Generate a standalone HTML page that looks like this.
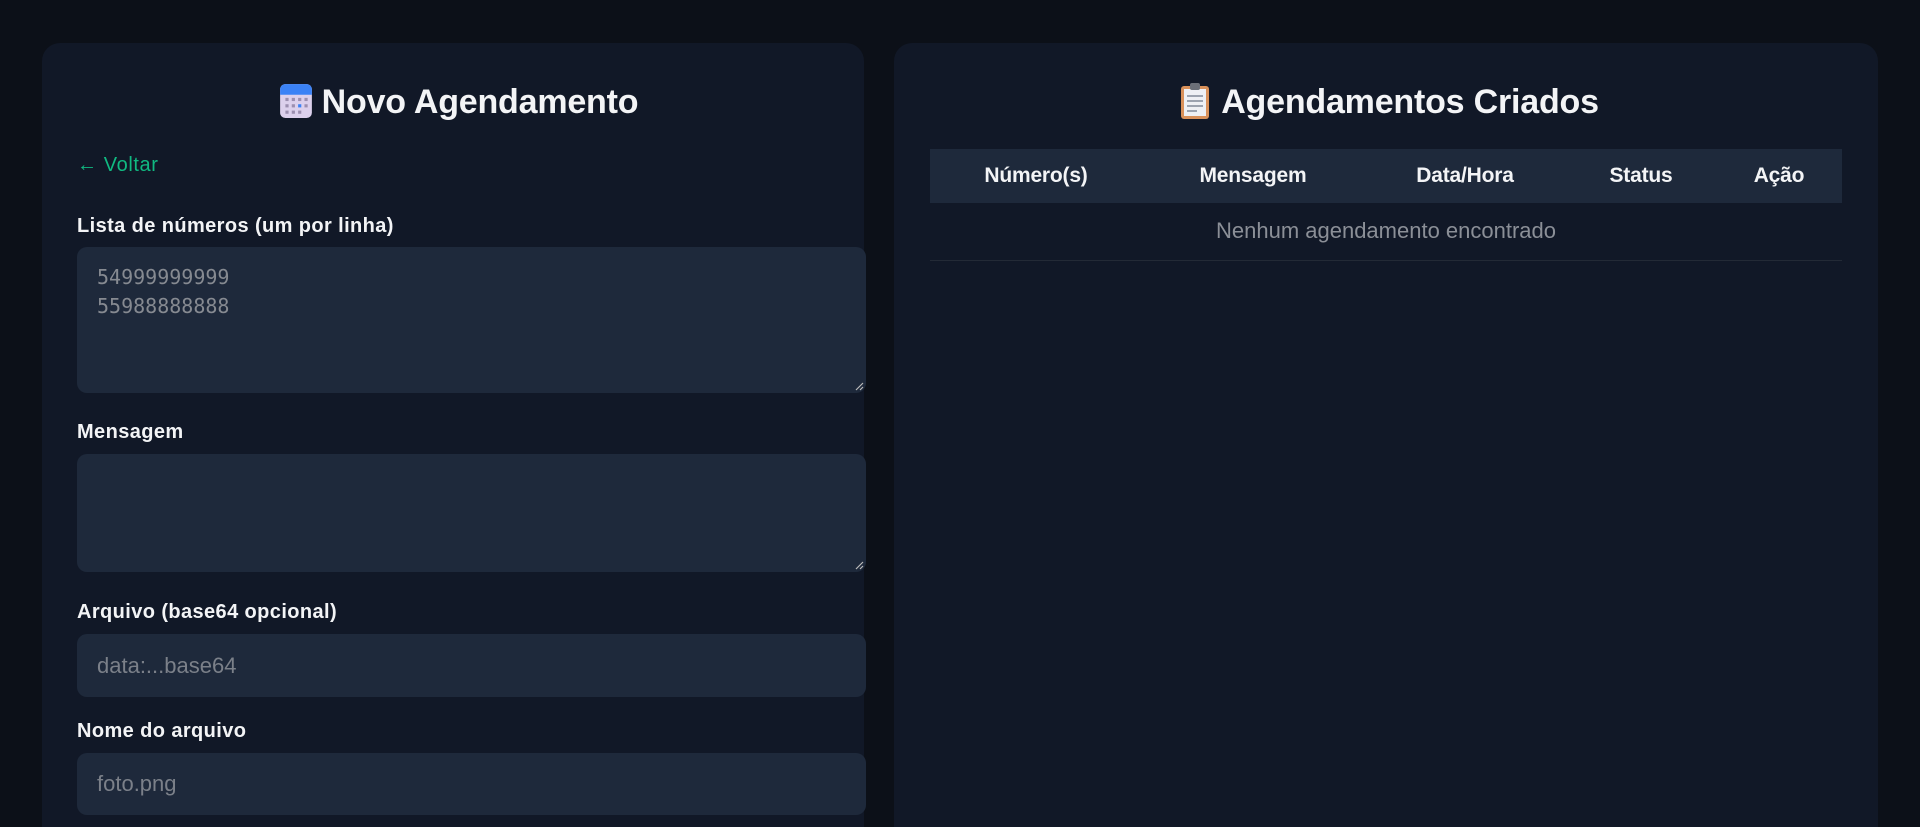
<!DOCTYPE html>
<html style="overflow:hidden"><head><meta charset="utf-8"><style>
*{box-sizing:border-box;margin:0;padding:0}
html,body{width:1920px;height:827px;overflow:hidden}
body{background:#0c1018;font-family:"Liberation Sans",sans-serif;color:#f3f4f6;position:relative}
.card{position:absolute;top:43px;background:#111827;border-radius:18px;height:784px;border-bottom-left-radius:0;border-bottom-right-radius:0}
.l{left:42px;width:822px}
.r{left:894px;width:984px}
h2{position:absolute;top:81px;text-align:center;font-size:34px;font-weight:bold;line-height:42px;letter-spacing:-0.2px}
.back{position:absolute;left:77px;top:152px;color:#10b981;font-size:20px;line-height:26px;letter-spacing:0.6px}
.lab{position:absolute;left:77px;font-size:20px;font-weight:bold;line-height:24px;letter-spacing:0.4px}
.box{position:absolute;left:77px;width:789px;background:#1e293b;border-radius:10px;color:#7b8089;font-size:22px}
.mono{font-family:"DejaVu Sans Mono",monospace;font-size:20px;line-height:29px;padding:16px 20px;color:#868a91}
.grip{position:absolute;right:2px;bottom:2px}
table{position:absolute;left:930px;top:149px;width:912px;border-collapse:collapse}
th{background:#1e293b;height:54px;font-size:21px;font-weight:bold;text-align:center;letter-spacing:-0.2px}
td{height:57px;text-align:center;color:#8b8f97;font-size:22px;border-bottom:1px solid #232a36}
</style></head><body>
<div class="card l"></div>
<div class="card r"></div>
<h2 style="left:48px;width:822px">
<svg width="32" height="36" viewBox="0 0 30 34" style="vertical-align:-5px;margin-right:10px"><rect x="0" y="2" width="30" height="32" rx="5" fill="#dcd0ec"/><path d="M0 7a5 5 0 0 1 5-5h20a5 5 0 0 1 5 5v5H0z" fill="#3b82f6"/><g fill="#9c8fb0"><rect x="5" y="15" width="3" height="3"/><rect x="11" y="15" width="3" height="3"/><rect x="17" y="15" width="3" height="3"/><rect x="23" y="15" width="3" height="3"/><rect x="5" y="21" width="3" height="3"/><rect x="11" y="21" width="3" height="3"/><rect x="23" y="21" width="3" height="3"/><rect x="5" y="27" width="3" height="3"/><rect x="11" y="27" width="3" height="3"/><rect x="17" y="27" width="3" height="3"/></g><rect x="17" y="21" width="3" height="3" fill="#3b82f6"/></svg>Novo Agendamento</h2>
<h2 style="left:898px;width:984px">
<svg width="28" height="36" viewBox="0 0 28 36" style="vertical-align:-6px;margin-right:12px"><rect x="0" y="3" width="28" height="33" rx="3" fill="#d9915a"/><rect x="3" y="6" width="22" height="27" fill="#eef0f4"/><rect x="9" y="0" width="10" height="7" rx="2" fill="#6b6f78"/><g fill="#9ca3af"><rect x="6" y="12" width="16" height="2"/><rect x="6" y="17" width="16" height="2"/><rect x="6" y="22" width="16" height="2"/><rect x="6" y="27" width="10" height="2"/></g></svg>Agendamentos Criados</h2>
<div class="back">← Voltar</div>
<div class="lab" style="top:214px">Lista de números (um por linha)</div>
<div class="box mono" style="top:247px;height:146px">54999999999<br>55988888888<svg class="grip" width="9" height="9" viewBox="0 0 9 9"><path d="M8 1L1 8M8 5L5 8" stroke="#bbb" stroke-width="1.2"/></svg></div>
<div class="lab" style="top:420px">Mensagem</div>
<div class="box" style="top:454px;height:118px"><svg class="grip" width="9" height="9" viewBox="0 0 9 9"><path d="M8 1L1 8M8 5L5 8" stroke="#bbb" stroke-width="1.2"/></svg></div>
<div class="lab" style="top:600px">Arquivo (base64 opcional)</div>
<div class="box" style="top:634px;height:63px;line-height:63px;padding-left:20px">data:...base64</div>
<div class="lab" style="top:719px">Nome do arquivo</div>
<div class="box" style="top:753px;height:62px;line-height:62px;padding-left:20px">foto.png</div>
<table><tr><th style="width:212px">Número(s)</th><th style="width:222px">Mensagem</th><th style="width:202px">Data/Hora</th><th style="width:150px">Status</th><th style="width:126px">Ação</th></tr>
<tr><td colspan="5">Nenhum agendamento encontrado</td></tr></table>
</body></html>
